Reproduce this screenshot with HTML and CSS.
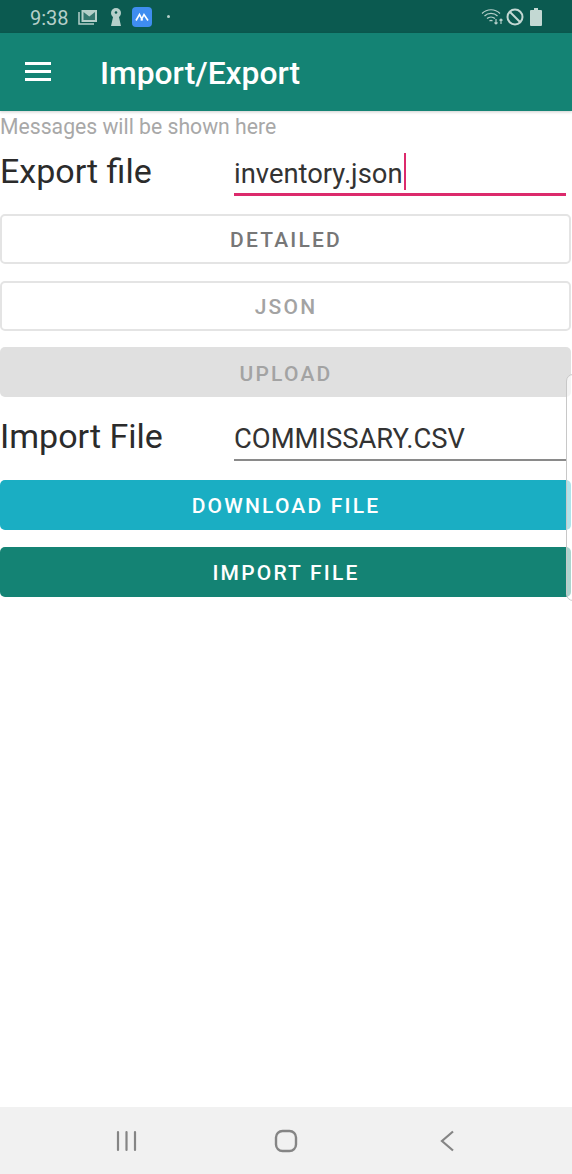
FILE: index.html
```html
<!DOCTYPE html>
<html lang="en">
<head>
    <meta charset="UTF-8">
    <meta name="viewport" content="width=device-width, initial-scale=1.0">
    <title>Import/Export</title>
    <link rel="stylesheet" href="styles.css">
</head>
<body>
    <div class="screen">
        <div class="status-bar">
            <span class="clock">9:38</span>
            <svg class="st-mail" width="20" height="16" viewBox="0 0 20 16">
                <path d="M1 3v12h15" fill="none" stroke="#b5cfc9" stroke-width="1.5"/>
                <path d="M3.500 1h15.500v12h-15.500z" fill="#b5cfc9"/>
                <path d="M5.500 3v8h11.500v-8l-5.700 4.500z" fill="#0b5a50" opacity=".75"/>
            </svg>
            <svg class="st-key" width="12" height="18" viewBox="0 0 12 18">
                <circle cx="6" cy="5" r="5" fill="#b5cfc9"/>
                <path d="M3.500 7h5l2.500 11h-10z" fill="#b5cfc9"/>
                <circle cx="6" cy="4.500" r="1.300" fill="#0b5a50"/>
            </svg>
            <svg class="st-app" width="20" height="20" viewBox="0 0 20 20">
                <rect width="20" height="20" rx="4" fill="#3f8df0"/>
                <path d="M4 13.500l3.500-6 3 6M9 13.500l3-6 4 6" fill="none" stroke="#fff" stroke-width="1.600"/>
            </svg>
            <span class="st-dot"></span>
            <span class="st-spacer"></span>
            <svg class="st-wifi" width="23" height="18" viewBox="0 0 23 18">
                <g fill="none" stroke="#b5cfc9" stroke-width="1.200">
                    <path d="M1 5.500c5-5 13-5 18 0"/>
                    <path d="M3.500 8c3.500-3.500 9.500-3.500 13 0"/>
                    <path d="M6 10.500c2.300-2 5.700-2 8 0"/>
                    <path d="M8.500 13c1-.8 2-.8 3 0"/>
                    <path d="M15 11v5M13.500 14.500l1.500 1.500 1.500-1.500M20 16v-5M18.500 12.500l1.500-1.500 1.500 1.500"/>
                </g>
            </svg>
            <svg class="st-block" width="18" height="18" viewBox="0 0 18 18">
                <circle cx="9" cy="9" r="7.500" fill="none" stroke="#c3d8d3" stroke-width="2"/>
                <path d="M4 4l10 10" stroke="#c3d8d3" stroke-width="2"/>
            </svg>
            <svg class="st-batt" width="12" height="18" viewBox="0 0 12 18">
                <path d="M4 0h4v2h3a1 1 0 0 1 1 1v14a1 1 0 0 1-1 1h-10a1 1 0 0 1-1-1v-14a1 1 0 0 1 1-1h3z" fill="#c3d8d3"/>
            </svg>
        </div>

        <div class="toolbar">
            <div class="hamburger"><span></span><span></span><span></span></div>
            <h1>Import/Export</h1>
        </div>

        <div class="content">
            <div class="messages">Messages will be shown here</div>

            <div class="field-row row-export">
                <div class="field-label">Export file</div>
                <div class="field-input focused"><span>inventory.json</span><i class="caret"></i></div>
            </div>

            <div class="buttons">
                <button class="btn btn-outline btn-dark">Detailed</button>
                <button class="btn btn-outline btn-light">JSON</button>
                <button class="btn btn-disabled">Upload</button>
            </div>

            <div class="field-row row-import">
                <div class="field-label">Import File</div>
                <div class="field-input"><span>COMMISSARY.CSV</span></div>
            </div>

            <div class="buttons buttons-import">
                <button class="btn btn-cyan">Download file</button>
                <button class="btn btn-teal">Import file</button>
            </div>

            <div class="edge-panel"></div>
        </div>

        <div class="nav-bar">
            <svg width="24" height="22" viewBox="0 0 24 22">
                <path d="M3 2v18M11.500 2v18M20 2v18" stroke="#858585" stroke-width="2.200" stroke-linecap="round"/>
            </svg>
            <svg class="nav-home" width="24" height="24" viewBox="0 0 24 24">
                <rect x="2" y="2" width="20" height="20" rx="6.500" fill="none" stroke="#858585" stroke-width="2.400"/>
            </svg>
            <svg class="nav-back" width="16" height="22" viewBox="0 0 16 22">
                <path d="M15 1.500l-11 9.500 11 9.500" fill="none" stroke="#858585" stroke-width="2.200"/>
            </svg>
        </div>
    </div>
</body>
</html>
```

FILE: styles.css
```css
html, body {
    margin: 0;
    padding: 0;
    background: white;
}
.screen {
    display: flex;
    flex-direction: column;
    width: 572px;
    height: 1174px;
    overflow: hidden;
    font-family: Roboto, sans-serif;
}
.status-bar {
    display: flex;
    align-items: center;
    height: 33px;
    padding: 0 30px 0 30px;
    background: #0b5a50;
    color: #b5cfc9;
    flex-shrink: 0;
    box-sizing: border-box;
}
.clock {
    font-size: 20px;
    width: 48px;
    padding-top: 2px;
}
.st-key {
    margin-left: 12px;
}
.st-app {
    margin-left: 10px;
}
.st-dot {
    width: 3px;
    height: 3px;
    margin-left: 15px;
    border-radius: 50%;
    background: #b5cfc9;
}
.st-spacer {
    flex: 1;
}
.st-wifi {
    margin-right: 1px;
}
.st-block {
    margin-left: 1px;
}
.st-batt {
    margin-left: 6px;
}
.toolbar {
    display: flex;
    align-items: center;
    height: 78px;
    background: #148374;
    flex-shrink: 0;
    position: relative;
    box-shadow: 0 1px 3px rgba(0,0,0,0.2);
}
.hamburger {
    display: flex;
    flex-direction: column;
    gap: 5px;
    width: 26px;
    margin: 0 0 0 25px;
    padding-bottom: 1px;
}
.hamburger span {
    height: 3px;
    background: white;
}
.toolbar h1 {
    margin: 0 0 0 49px;
    padding-top: 2px;
    font-size: 31.800px;
    font-weight: 500;
    color: white;
}
.content {
    flex: 1;
    position: relative;
}
.messages {
    height: 20px;
    margin-top: 5px;
    font-size: 21.200px;
    line-height: 22px;
    color: #a8a8a8;
}
.field-row {
    display: flex;
    align-items: flex-start;
}
.row-export {
    margin-top: 12px;
}
.row-import {
    margin-top: 17px;
}
.field-label {
    width: 234px;
    font-size: 34px;
    line-height: 46px;
    color: #2b2b2b;
}
.row-import .field-label {
    line-height: 44px;
}
.field-input {
    display: flex;
    align-items: center;
    width: 332px;
    height: 47px;
    padding-top: 2px;
    box-sizing: border-box;
    border-bottom: 2px solid #8a8a8a;
    font-size: 27.400px;
    color: #333;
}
.field-input span {
    padding-top: 3px;
}
.field-input.focused {
    height: 48px;
    border-bottom: 3px solid #dc2a6c;
}
.field-input.focused span {
    padding-top: 5px;
}
.caret {
    width: 2px;
    height: 37px;
    margin-left: 1px;
    background: #dc2a6c;
}
.buttons {
    display: flex;
    flex-direction: column;
    gap: 17px;
    margin-top: 18px;
}
.buttons-import {
    margin-top: 19px;
}
.btn {
    display: block;
    width: 571px;
    height: 50px;
    margin: 0;
    padding: 2px 0 0 1px;
    border: none;
    border-radius: 5px;
    font-family: Roboto, sans-serif;
    font-size: 21px;
    font-weight: 500;
    letter-spacing: 2.200px;
    text-transform: uppercase;
}
.btn-outline {
    background: white;
    border: 2px solid #e4e4e4;
}
.btn-dark {
    color: #777;
}
.btn-light {
    color: #a3a3a3;
}
.btn-disabled {
    margin-top: -1px;
    padding-top: 3px;
    background: #e0e0e0;
    color: #a3a3a3;
}
.btn-cyan {
    background: #1aaec3;
    color: white;
}
.btn-teal {
    background: #148374;
    color: white;
}
.edge-panel {
    position: absolute;
    top: 263px;
    right: -8px;
    width: 12px;
    height: 225px;
    border: 1px solid #c8c8c8;
    border-radius: 8px;
    background: rgba(255,255,255,0.65);
}
.nav-bar {
    display: flex;
    align-items: center;
    height: 67px;
    padding: 0 0 0 115px;
    background: #f1f1f1;
    flex-shrink: 0;
    box-sizing: border-box;
}
.nav-home {
    margin-left: 135px;
}
.nav-back {
    margin-left: 140px;
}
```
